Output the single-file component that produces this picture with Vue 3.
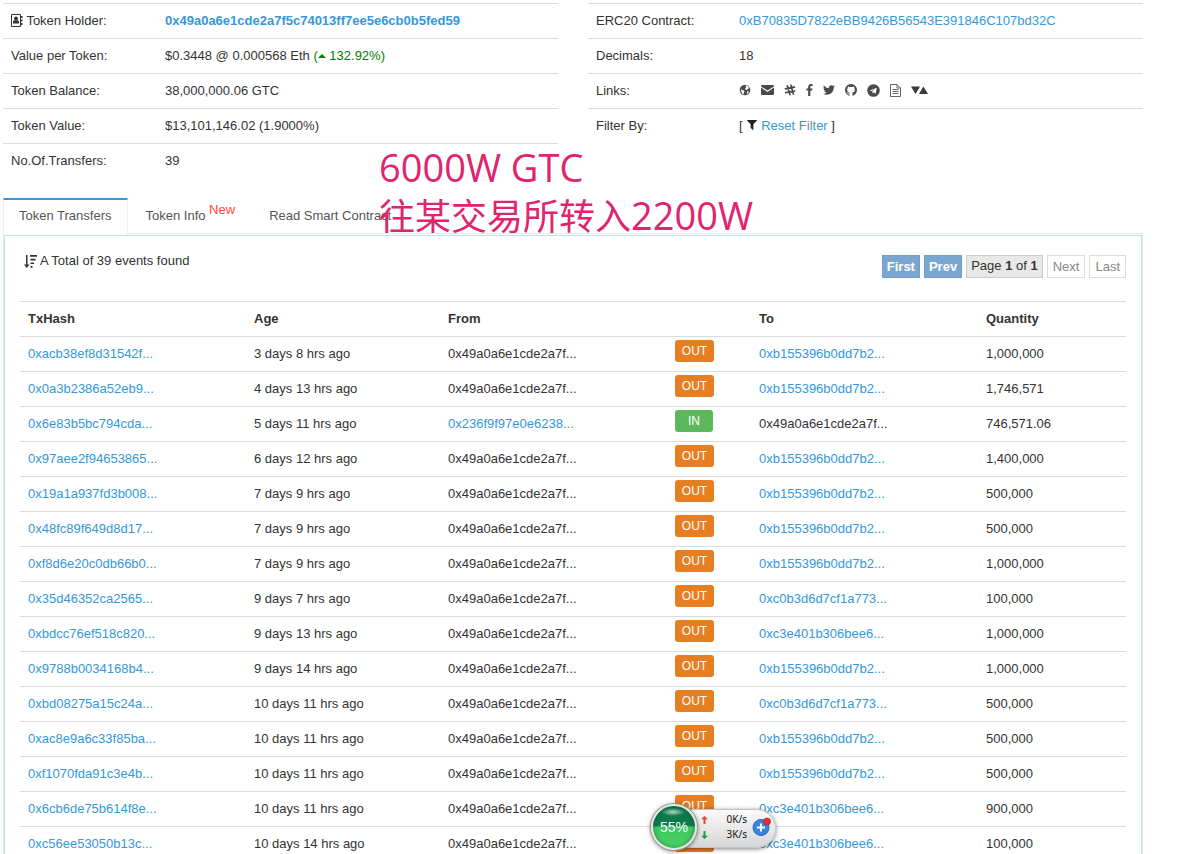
<script setup>
const summary = [
  { label: 'Value per Token:', value: '$0.3448 @ 0.000568 Eth', change: '132.92%' },
  { label: 'Token Balance:', value: '38,000,000.06 GTC' },
  { label: 'Token Value:', value: '$13,101,146.02 (1.9000%)' },
  { label: 'No.Of.Transfers:', value: '39' },
]

const holder = '0x49a0a6e1cde2a7f...'
const b155 = '0xb155396b0dd7b2...'
const c0b3 = '0xc0b3d6d7cf1a773...'
const c3e4 = '0xc3e401b306bee6...'

const out = (hash, age, to, quantity) => ({ hash, age, from: holder, dir: 'OUT', to, quantity })

const transfers = [
  out('0xacb38ef8d31542f...', '3 days 8 hrs ago', b155, '1,000,000'),
  out('0x0a3b2386a52eb9...', '4 days 13 hrs ago', b155, '1,746,571'),
  { hash: '0x6e83b5bc794cda...', age: '5 days 11 hrs ago', from: '0x236f9f97e0e6238...', dir: 'IN', to: holder, quantity: '746,571.06' },
  out('0x97aee2f94653865...', '6 days 12 hrs ago', b155, '1,400,000'),
  out('0x19a1a937fd3b008...', '7 days 9 hrs ago', b155, '500,000'),
  out('0x48fc89f649d8d17...', '7 days 9 hrs ago', b155, '500,000'),
  out('0xf8d6e20c0db66b0...', '7 days 9 hrs ago', b155, '1,000,000'),
  out('0x35d46352ca2565...', '9 days 7 hrs ago', c0b3, '100,000'),
  out('0xbdcc76ef518c820...', '9 days 13 hrs ago', c3e4, '1,000,000'),
  out('0x9788b0034168b4...', '9 days 14 hrs ago', b155, '1,000,000'),
  out('0xbd08275a15c24a...', '10 days 11 hrs ago', c0b3, '500,000'),
  out('0xac8e9a6c33f85ba...', '10 days 11 hrs ago', b155, '500,000'),
  out('0xf1070fda91c3e4b...', '10 days 11 hrs ago', b155, '500,000'),
  out('0x6cb6de75b614f8e...', '10 days 11 hrs ago', c3e4, '900,000'),
  out('0xc56ee53050b13c...', '10 days 14 hrs ago', c3e4, '100,000'),
]
</script>

<template>
  <main class="page">
    <section class="overview">
      <table class="info info-left">
        <tbody>
          <tr>
            <th scope="row">
              <svg class="book" viewBox="0 0 12 13" width="12" height="13" aria-hidden="true">
                <path d="M.5.5h9v12h-9z" fill="none" stroke="#333" />
                <path d="M10 2h1.500v2H10zM10 5.500h1.500v2H10zM10 9h1.500v2H10z" fill="#333" />
                <circle cx="5" cy="4.500" r="1.900" fill="#333" />
                <path d="M2 9.500V8q0-1.500 1.500-1.800h3Q8 6.500 8 8v1.500z" fill="#333" />
              </svg>
              Token Holder:
            </th>
            <td><a href="#holder" class="strong">0x49a0a6e1cde2a7f5c74013ff7ee5e6cb0b5fed59</a></td>
          </tr>
          <tr v-for="row in summary" :key="row.label">
            <th scope="row">{{ row.label }}</th>
            <td>
              {{ row.value }}
              <span v-if="row.change" class="up">(<svg viewBox="0 0 8 8" width="8" height="8" aria-hidden="true"><path d="M0 6l4-4 4 4z" fill="#008000" /></svg> {{ row.change }})</span>
            </td>
          </tr>
        </tbody>
      </table>

      <table class="info info-right">
        <tbody>
          <tr>
            <th scope="row">ERC20 Contract:</th>
            <td><a href="#contract">0xB70835D7822eBB9426B56543E391846C107bd32C</a></td>
          </tr>
          <tr>
            <th scope="row">Decimals:</th>
            <td>18</td>
          </tr>
          <tr>
            <th scope="row">Links:</th>
            <td class="links-cell">
              <div class="links">
                <a href="#web" aria-label="Website">
                  <svg viewBox="0 0 12 12" width="12" height="12">
                    <circle cx="6" cy="6" r="5.300" fill="#4a4a4a" />
                    <path d="M6.600 1.300l2.400 1 1.300 2-1.500.5-.7 1.300-1.600-.3-.3-1.200 1-1zM1.800 5.600l2 .3L5.500 7.200l-.6 1.200-.2 2-1.500-.9-.8-2zM8 7.400l1.900.1-.7 1.600-1.300 1z" fill="#fff" />
                  </svg>
                </a>
                <a href="#mail" aria-label="Email">
                  <svg viewBox="0 0 13 10" width="13" height="10">
                    <path d="M1 0h11q1 0 1 1v.4L6.500 5.600 0 1.400V1q0-1 1-1zM0 2.600l6.500 4.300L13 2.600V9q0 1-1 1H1q-1 0-1-1z" fill="#4a4a4a" />
                  </svg>
                </a>
                <a href="#slack" aria-label="Slack">
                  <svg viewBox="0 0 12 12" width="12" height="12">
                    <path d="M3.300 1.800l2.600 8.800M7 1.200l2.400 8.800M1.400 4.800l9-1.600M1.600 8.700l9.200-1.700" fill="none" stroke="#4a4a4a" stroke-width="1.700" stroke-linecap="round" />
                  </svg>
                </a>
                <a href="#facebook" aria-label="Facebook">
                  <svg viewBox="470 0 900 1664" width="7" height="12">
                    <path d="M1343 12v264h-157q-86 0-116 36t-30 108v189h293l-39 296h-254v759h-306v-759h-255v-296h255v-218q0-186 104-288.500t277-102.500q147 0 228 12z" fill="#4a4a4a" />
                  </svg>
                </a>
                <a href="#twitter" aria-label="Twitter">
                  <svg viewBox="100 200 1600 1400" width="12" height="12">
                    <path d="M1684 408q-67 98-162 167 1 14 1 42 0 130-38 259.500t-115.500 248.500-184.500 210.500-258 146-323 54.500q-271 0-496-145 35 4 78 4 225 0 401-138-105-2-188-64.500t-114-159.500q33 5 61 5 43 0 85-11-112-23-185.500-111.500t-73.500-205.500v-4q68 38 146 41-66-44-105-115t-39-154q0-88 44-163 121 149 294.500 238.500t371.500 99.500q-8-38-8-74 0-134 94.500-228.500t228.500-94.500q140 0 236 102 109-21 205-78-37 115-142 178 93-10 186-50z" fill="#4a4a4a" />
                  </svg>
                </a>
                <a href="#github" aria-label="GitHub">
                  <svg viewBox="128 128 1536 1536" width="12" height="12">
                    <path d="M896 128q209 0 385.500 103t279.500 279.500 103 385.500q0 251-146.500 451.500t-378.500 277.500q-27 5-40-7t-13-30q0-3 .5-76.500t.5-134.500q0-97-52-142 57-6 102.500-18t94-39 81-66.500 53-105 20.500-150.500q0-119-79-206 37-91-8-204-28-9-81 11t-92 44l-38 24q-93-26-192-26t-192 26q-16-11-42.500-27t-83.500-38.500-85-13.500q-45 113-8 204-79 87-79 206 0 85 20.500 150t52.500 105 80.500 67 94 39 102.500 18q-39 36-49 103-21 10-45 15t-57 5-65.500-21.500-55.500-62.500q-19-32-48.500-52t-49.500-24l-20-3q-21 0-29 4.500t-5 11.500 9 14 13 12l7 5q22 10 43.500 38t31.500 51l10 23q13 38 44 61.500t67 30 69.500 7 55.500-3.500l23-4q0 38 .5 88.500t.5 54.500q0 18-13 30t-40 7q-232-77-378.500-277.500t-146.500-451.500q0-209 103-385.500t279.500-279.500 385.500-103z" fill="#4a4a4a" />
                  </svg>
                </a>
                <a href="#telegram" aria-label="Telegram">
                  <svg viewBox="0 0 13 13" width="13" height="13">
                    <circle cx="6.500" cy="6.500" r="6.300" fill="#4a4a4a" />
                    <path d="M2.600 6.600l7.200-2.900-1.200 6-2-1.400-1.100 1.100-.2-2.100 2.800-2.500-3.600 2.200z" fill="#fff" />
                  </svg>
                </a>
                <a href="#paper" aria-label="Whitepaper">
                  <svg viewBox="0 0 11 13" width="11" height="13">
                    <path d="M.5.5h6.500l3.500 3.500v8.500H.5zM7 .5V4h3.500M2.500 5.500h6M2.500 7.500h6M2.500 9.500h6" fill="none" stroke="#666" />
                  </svg>
                </a>
                <a href="#market" aria-label="Market data">
                  <svg viewBox="0 0 17 8" width="17" height="8">
                    <path d="M0 .5h9L4.500 8zM8 8l4.300-7.500L17 8z" fill="#3a3a3a" />
                  </svg>
                </a>
              </div>
            </td>
          </tr>
          <tr>
            <th scope="row">Filter By:</th>
            <td>
              [ <svg class="funnel" viewBox="190 250 1412 1420" width="10" height="10" aria-hidden="true"><path d="M1595 295q17 41-14 70l-493 493v742q0 42-39 59-13 5-25 5-27 0-45-19l-256-256q-19-19-19-45v-486l-493-493q-31-29-14-70 17-39 59-39h1280q42 0 59 39z" fill="#222" /></svg>
              <a href="#reset">Reset Filter</a> ]
            </td>
          </tr>
        </tbody>
      </table>
    </section>

    <nav class="tabs">
      <a href="#transfers" class="tab active">Token Transfers</a>
      <a href="#info" class="tab">Token Info <span class="new">New</span></a>
      <a href="#read" class="tab">Read Smart Contract</a>
    </nav>

    <section class="frame">
      <div class="panel">
        <div class="toolbar">
          <p class="total">
            <svg viewBox="0 0 14 13" width="14" height="13" aria-hidden="true">
              <path d="M2 0h1.500v9.500h2L2.800 13 0 9.500h2zM6 0h7v1.700H6zM6.500 3.700h5v1.700h-5zM6.500 7.400h3.500v1.700H6.500zM6.500 11h2v1.700h-2z" fill="#333" />
            </svg>
            A Total of 39 events found
          </p>
          <div class="pager">
            <button type="button" class="primary">First</button>
            <button type="button" class="primary">Prev</button>
            <span class="current">Page <b>1</b> of <b>1</b></span>
            <button type="button">Next</button>
            <button type="button">Last</button>
          </div>
        </div>

        <table class="transfers">
          <colgroup>
            <col class="c-hash"><col class="c-age"><col class="c-address"><col class="c-dir"><col class="c-address"><col>
          </colgroup>
          <thead>
            <tr>
              <th scope="col">TxHash</th>
              <th scope="col">Age</th>
              <th scope="col">From</th>
              <td></td>
              <th scope="col">To</th>
              <th scope="col">Quantity</th>
            </tr>
          </thead>
          <tbody>
            <tr v-for="t in transfers" :key="t.hash">
              <td><a href="#tx">{{ t.hash }}</a></td>
              <td>{{ t.age }}</td>
              <td>
                <a v-if="t.dir === 'IN'" href="#from">{{ t.from }}</a>
                <template v-else>{{ t.from }}</template>
              </td>
              <td class="dir"><span class="badge" :class="{ in: t.dir === 'IN' }">{{ t.dir }}</span></td>
              <td>
                <a v-if="t.dir === 'OUT'" href="#to">{{ t.to }}</a>
                <template v-else>{{ t.to }}</template>
              </td>
              <td>{{ t.quantity }}</td>
            </tr>
          </tbody>
        </table>
      </div>
    </section>

    <div class="note">
      <div><span class="latin">6000W GTC</span></div>
      <div>往某交易所转入<span class="latin">2200W</span></div>
    </div>

    <aside class="monitor">
      <div class="gauge">55%</div>
      <div class="speeds">
        <div class="speed">
          <svg viewBox="0 0 7 8" width="7" height="8" aria-hidden="true"><path d="M3.500 0L7 3.300H4.500V8h-2V3.300H0z" fill="#e2492f" /></svg>
          <span>0K/s</span>
        </div>
        <div class="speed">
          <svg viewBox="0 0 7 8" width="7" height="8" aria-hidden="true"><path d="M3.500 8L0 4.700h2.500V0h2v4.700H7z" fill="#1f9a4c" /></svg>
          <span>3K/s</span>
        </div>
      </div>
      <button type="button" class="plus" aria-label="Boost">
        <svg viewBox="0 0 20 20" width="20" height="20">
          <circle cx="9" cy="10.500" r="8" fill="#3b82e0" stroke="#2c66bd" />
          <path d="M9 6.500v8M5 10.500h8" stroke="#fff" stroke-width="2" />
          <circle cx="15" cy="4.500" r="3.600" fill="#e03030" stroke="#a82020" stroke-width=".6" />
        </svg>
      </button>
    </aside>
  </main>
</template>

<style>
body {
  margin: 0;
  background: #fff;
}
</style>

<style scoped>
.page {
  position: relative;
  box-sizing: border-box;
  padding: 3px 57px 0 3px;
  font: 13px/20px "Liberation Sans", Arial, sans-serif;
  color: #333;
}
a {
  color: #3498db;
  text-decoration: none;
}
.strong {
  font-weight: bold;
}
.overview {
  display: grid;
  grid-template-columns: 1fr 1fr;
  align-items: start;
  gap: 30px;
}
table {
  width: 100%;
  table-layout: fixed;
  border-collapse: separate;
  border-spacing: 0;
}
th,
td {
  height: 34px;
  box-sizing: content-box;
  padding: 0 8px;
  border-top: 1px solid #ddd;
  text-align: left;
  white-space: nowrap;
}
.info th {
  font-weight: normal;
}
.info-left th {
  width: 138px;
}
.info-right th {
  width: 127px;
}
.book {
  vertical-align: -2px;
}
.up {
  color: #008000;
}
.info .links-cell {
  height: 32px;
  padding-bottom: 2px;
}
.links {
  display: flex;
  align-items: center;
  gap: 10px;
}
.links a,
.links svg {
  display: block;
}
.funnel {
  margin: 0 4px 0 1px;
}
.tabs {
  display: flex;
  gap: 2px;
  margin-top: 20px;
}
.tab {
  padding: 9px 16px 8px;
  line-height: 18px;
  color: #555;
}
.tab.active {
  position: relative;
  margin-bottom: -1px;
  padding: 7px 15px 9px;
  border: 1px solid #eee;
  border-top: 2px solid #3498db;
  border-bottom: 0;
  background: #fff;
}
.new {
  position: relative;
  top: -6px;
  color: #ff4a3d;
}
.frame {
  padding-top: 1px;
  border: 1px solid #eaeaea;
}
.panel {
  padding: 15px 15px 14px;
  border: 1px solid #b8e6ec;
}
.toolbar {
  display: flex;
  justify-content: space-between;
  align-items: flex-start;
  height: 50px;
}
.total {
  display: flex;
  align-items: center;
  gap: 2px;
  margin: 0 0 0 4px;
}
.pager {
  display: flex;
  gap: 4px;
  margin-top: 4px;
}
.pager button,
.current {
  box-sizing: border-box;
  height: 23px;
  padding: 0 5px;
  border: 1px solid #ddd;
  background: #fff;
  font: inherit;
  line-height: 21px;
  color: #888;
}
.pager .primary {
  padding: 0 4px;
  border-color: #6f9fc9;
  background: #7aa7d1;
  font-weight: bold;
  color: #fff;
}
.pager .current {
  padding: 0 4px;
  border-color: #ccc;
  background: #e8e8e8;
  line-height: 20px;
  color: #333;
}
.c-hash {
  width: 226px;
}
.c-age {
  width: 194px;
}
.c-address {
  width: 227px;
}
.c-dir {
  width: 84px;
}
.dir {
  padding-bottom: 6px;
  height: 28px;
}
.badge {
  display: block;
  box-sizing: border-box;
  width: 39px;
  border-radius: 3px;
  background: #e67e22;
  font-size: 12px;
  line-height: 22px;
  text-align: center;
  color: #fff;
}
.badge.in {
  width: 38px;
  background: #5cb85c;
}
.note {
  position: absolute;
  top: 143px;
  left: 379px;
  font: 36px/47px "Noto Sans CJK SC", sans-serif;
  color: #e0246e;
  white-space: nowrap;
}
.latin {
  font: 38px/47px "Open Sans", sans-serif;
}
.monitor {
  position: absolute;
  top: 804px;
  left: 651px;
  display: flex;
  align-items: center;
  box-sizing: border-box;
  height: 46px;
}
.monitor::before {
  content: "";
  position: absolute;
  inset: 5px 0 2px 20px;
  border: 1px solid #c4c4c4;
  border-radius: 20px;
  background: linear-gradient(#fafafa, #d6d6d6);
  box-shadow: 0 1px 4px rgba(0, 0, 0, 0.5);
}
.gauge {
  position: relative;
  box-sizing: border-box;
  width: 46px;
  height: 46px;
  border: 2px solid #e4e4e4;
  border-radius: 50%;
  background:
    radial-gradient(ellipse 12px 4px at 20px 6px, rgba(255, 255, 255, 0.7), transparent),
    linear-gradient(#0d7a4c 0 19px, #128052 20px, #3fc862 21px, #4bd163 100%);
  box-shadow: 0 0 0 1px #999, 0 1px 5px rgba(0, 0, 0, 0.6), inset 0 0 4px rgba(0, 60, 30, 0.5);
  font-size: 14px;
  line-height: 42px;
  text-align: center;
  color: #fff;
}
.speeds {
  position: relative;
  width: 46px;
  margin-left: 4px;
  font: 10px/15px "Noto Sans", sans-serif;
  color: #111;
}
.speed {
  display: flex;
  align-items: center;
  justify-content: space-between;
}
.plus {
  position: relative;
  margin: 0 4px 0 5px;
  padding: 0;
  border: 0;
  background: none;
}
.plus svg {
  display: block;
}
</style>
